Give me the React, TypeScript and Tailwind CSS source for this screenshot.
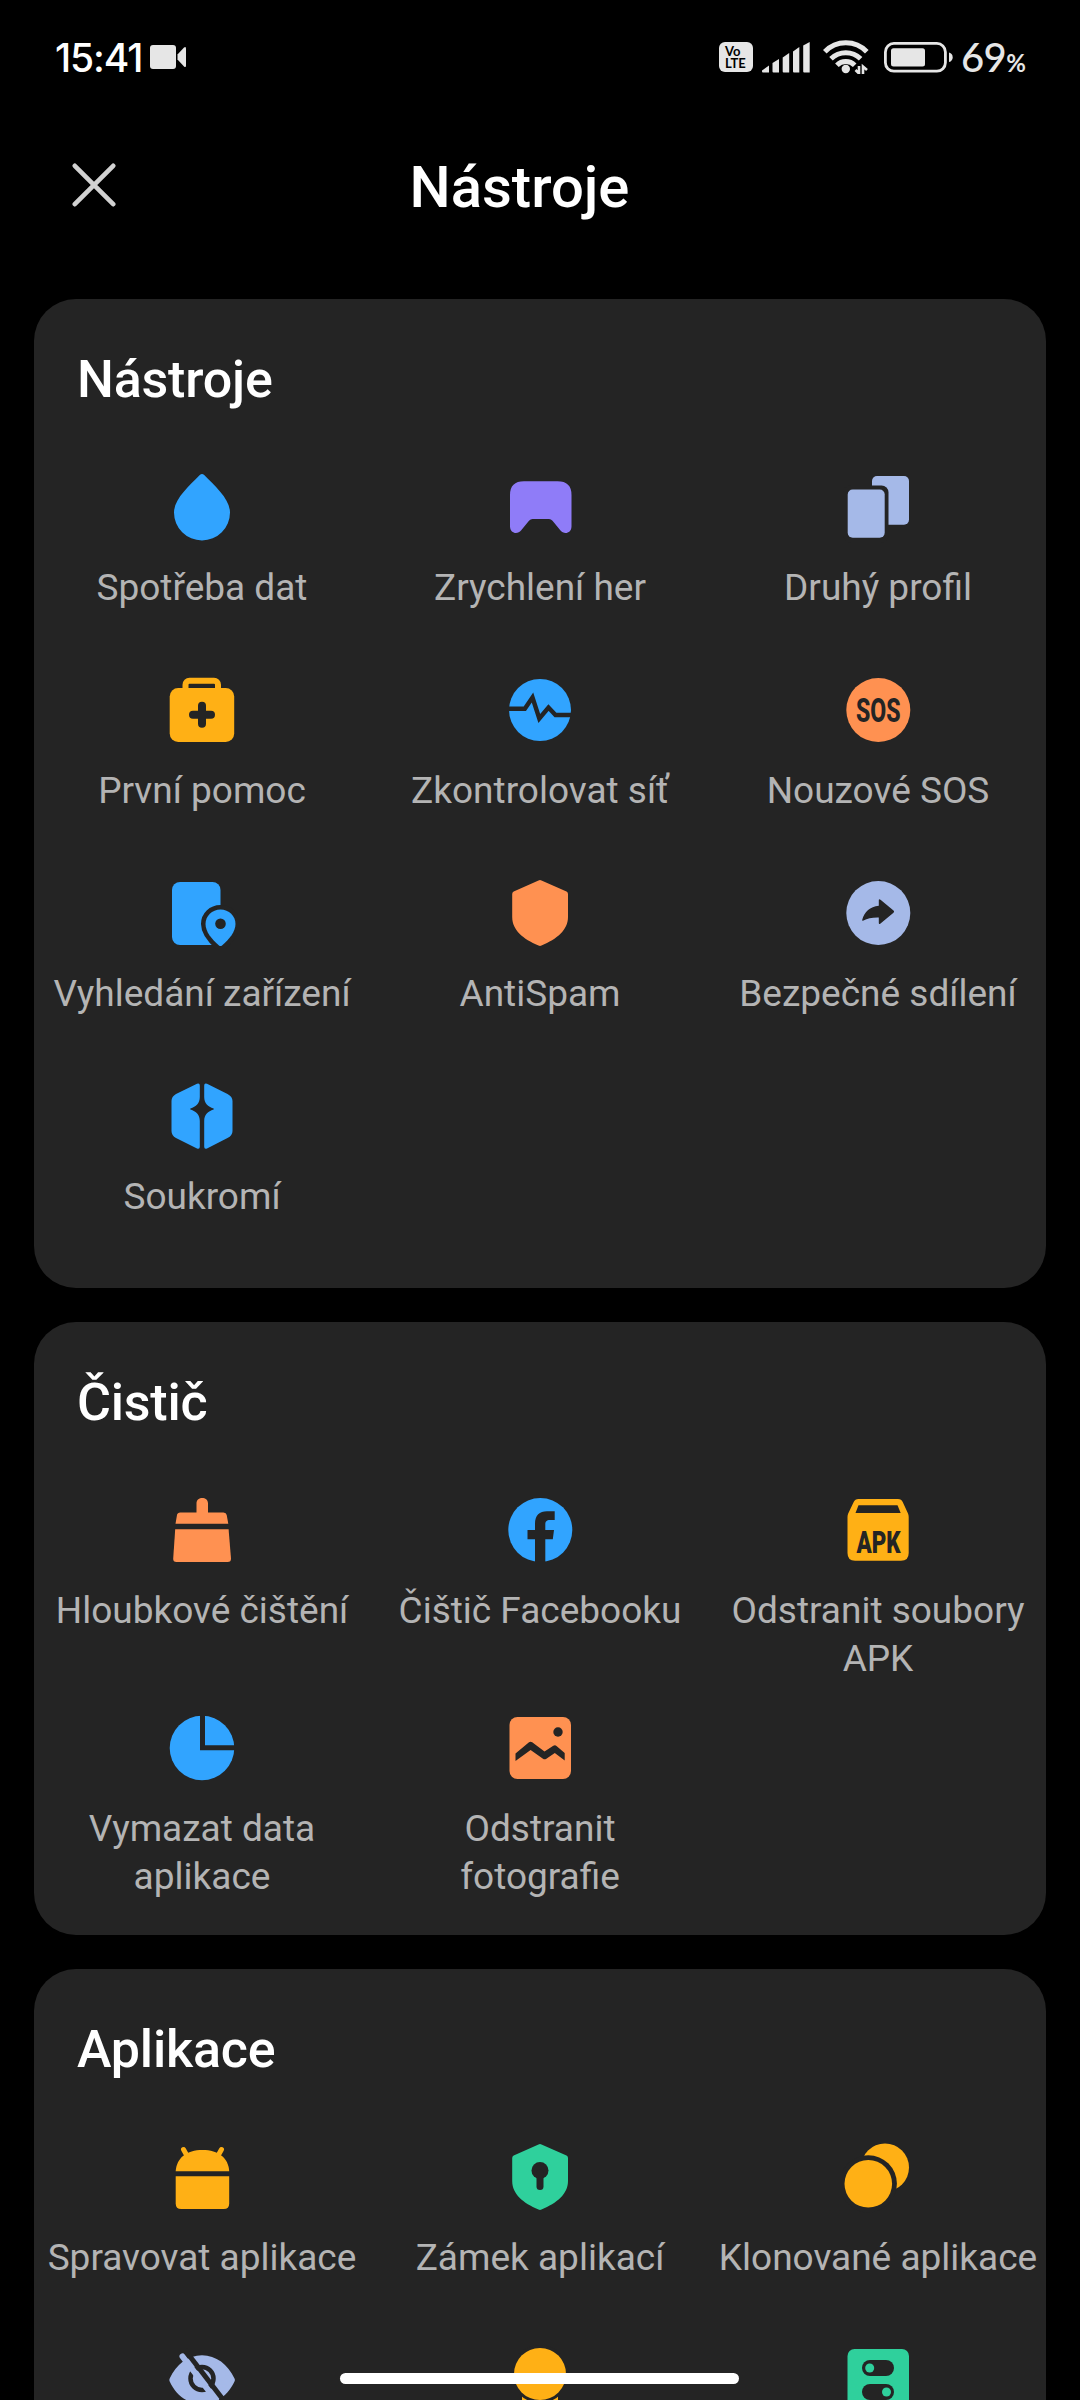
import type { ReactNode } from "react";

type Tool = {
  icon: ReactNode;
  label: string;
};

type ToolSection = {
  title: string;
  tools: Tool[];
};

const BLUE = "#31a4ff";
const ORANGE = "#ff9151";
const YELLOW = "#ffb015";
const LILAC = "#a5b9e8";
const PURPLE = "#8f7cf8";
const GREEN = "#2fd09c";
const CARD = "#242424";

function Icon({ children }: { children: ReactNode }) {
  return (
    <svg viewBox="0 0 72 72" className="h-[72px] w-[72px]" fill="none">
      {children}
    </svg>
  );
}

const SHIELD_PATH =
  "M34.5 3.5Q36 2.6 37.5 3.5L62.5 14.4Q64 15.2 64 17V40C64 53 53 62 37.5 68.6Q36 69.3 34.5 68.6C19 62 8.2 53 8.2 40V17Q8.2 15.2 9.7 14.4Z";

const DropIcon = () => (
  <Icon>
    <path
      d="M33.800 4Q36 1.800 38.200 4C49 15 64 28 64 41.500A28 28 0 0 1 8 41.500C8 28 23 15 33.800 4Z"
      fill={BLUE}
    />
  </Icon>
);

const GamepadIcon = () => (
  <Icon>
    <path
      d="M20 10.300H53.500Q67.500 10.300 67.500 24V55.500C67.300 63 59.500 63.500 56.500 59.500L48.500 49.700Q47 48 45 48H28.500Q26.500 48 25 49.700L17 59.500C14 63.500 6.300 63 6 55.500V24Q6 10.300 20 10.300Z"
      fill={PURPLE}
    />
  </Icon>
);

const SecondSpaceIcon = () => (
  <Icon>
    <rect x="30" y="5" width="37" height="48.800" rx="5" fill={LILAC} />
    <rect x="1.500" y="14.500" width="45" height="57" rx="7" fill={CARD} />
    <rect x="5.700" y="18.500" width="37" height="48.300" rx="5" fill={LILAC} />
  </Icon>
);

const FirstAidIcon = () => (
  <Icon>
    <rect x="19.500" y="6.700" width="32.500" height="18" rx="4" stroke={YELLOW} strokeWidth="6" />
    <rect x="3.700" y="14" width="64.500" height="54" rx="8.500" fill={YELLOW} />
    <path
      d="M36 31.700V49.700M27 40.700H45"
      stroke={CARD}
      strokeWidth="8"
      strokeLinecap="round"
    />
  </Icon>
);

const NetworkIcon = () => (
  <Icon>
    <circle cx="36" cy="36" r="31" fill={BLUE} />
    <path
      d="M3 34.700H20.800L28.500 23.500L35.300 44.500L44.500 33.500L51.500 41H69"
      stroke={CARD}
      strokeWidth="4.400"
    />
  </Icon>
);

const SosIcon = () => (
  <Icon>
    <circle cx="36.300" cy="36" r="32" fill={ORANGE} />
    <text
      transform="translate(36.300 47.500) scale(0.7 1)"
      textAnchor="middle"
      className="font-['Roboto'] text-[33px] font-extrabold"
      fill={CARD}
    >
      SOS
    </text>
  </Icon>
);

const FindDeviceIcon = () => (
  <Icon>
    <rect x="6" y="5" width="48.500" height="63" rx="8" fill={BLUE} />
    <path
      d="M54.500 32.500C63 32.500 69.500 39 69.500 47C69.500 55.500 63.500 62.500 54.500 70C45.500 62.500 39.500 55.500 39.500 47C39.500 39 46 32.500 54.500 32.500Z"
      fill={BLUE}
      stroke={CARD}
      strokeWidth="9"
    />
    <path
      d="M54.500 32.500C63 32.500 69.500 39 69.500 47C69.500 54.500 63.500 62 56 68.500Q54.500 69.700 53 68.500C45.500 62 39.500 54.500 39.500 47C39.500 39 46 32.500 54.500 32.500Z"
      fill={BLUE}
    />
    <circle cx="54.500" cy="46.700" r="5.300" fill={CARD} />
  </Icon>
);

const ShieldIcon = () => (
  <Icon>
    <path d={SHIELD_PATH} fill={ORANGE} />
  </Icon>
);

const ShareIcon = () => (
  <Icon>
    <circle cx="36.300" cy="36" r="32" fill={LILAC} />
    <path
      d="M36.800 23.500Q36.800 21.300 38.500 22.700L51.500 33.600Q52.800 34.700 51.500 35.800L38.500 46.500Q36.800 48 36.800 45.800V40.400C30 40.200 25.500 41.500 21.500 43.500Q19.700 44.300 20.300 42.500C22.500 35 28 29.500 36.800 28.800Z"
      fill={CARD}
    />
  </Icon>
);

const PrivacyIcon = () => (
  <Icon>
    <path
      d="M31 3.700Q33.800 2.600 33.800 5.500V17C33.800 23.500 30 26.500 24.500 28.500Q23.500 29 24.500 29.500C30 31.500 33.800 34.500 33.800 41V66.700Q33.800 69.600 31 68.500L10 58Q5.500 55.500 5.500 51V21Q5.500 16.500 10 14Z"
      fill={BLUE}
    />
    <path
      d="M41 3.700Q38.200 2.600 38.200 5.500V17C38.200 23.500 42 26.500 47.500 28.500Q48.500 29 47.500 29.500C42 31.500 38.200 34.500 38.200 41V66.700Q38.200 69.600 41 68.500L61.500 58Q66.500 55.500 66.500 51V21Q66.500 16.500 61.500 14Z"
      fill={BLUE}
    />
  </Icon>
);

const BroomIcon = () => (
  <Icon>
    <path
      d="M30.500 18.500V9.500C30.500 2.300 42 2.300 42 9.500V18.500H57.500Q60.300 18.500 60.700 21L62.300 29.800H9.500L11 21Q11.400 18.500 14.300 18.500Z"
      fill={ORANGE}
    />
    <path
      d="M9.200 35.200H62.600L65 64.500Q65.200 68 61.500 68H10.500Q7 68 7.200 64.500Z"
      fill={ORANGE}
    />
  </Icon>
);

const FacebookIcon = () => (
  <Icon>
    <circle cx="36.300" cy="36" r="32" fill={BLUE} />
    <path
      d="M31 70V45.200H23.500V36H31V30C31 21 35.500 17.300 43 17.300H50.700V26H46C42.500 26 41.300 27.500 41.300 30.500V36H50L48.800 45.200H41.300V70Z"
      fill={CARD}
    />
  </Icon>
);

const ApkIcon = () => (
  <Icon>
    <path
      d="M16.500 5H56Q59.500 5 60.700 8L66 19.500Q66.700 21 66.700 23V59Q66.700 66.800 59 66.800H13Q5.500 66.800 5.500 59V23Q5.500 21 6.200 19.500L11.700 8Q13 5 16.500 5Z"
      fill={YELLOW}
    />
    <path d="M16.500 11.300H55.500L58.700 19H13.500Z" fill={CARD} />
    <text
      transform="translate(36.500 58.700) scale(0.7 1)"
      textAnchor="middle"
      className="font-['Roboto'] text-[32px] font-black"
      fill={CARD}
    >
      APK
    </text>
  </Icon>
);

const PieIcon = () => (
  <Icon>
    <circle cx="36" cy="36" r="32.300" fill={BLUE} />
    <path d="M36.500 0V35.700H72" stroke={CARD} strokeWidth="5" />
  </Icon>
);

const PhotoIcon = () => (
  <Icon>
    <rect x="5.500" y="5" width="61.500" height="62" rx="8" fill={ORANGE} />
    <circle cx="54" cy="20" r="4.700" fill={CARD} />
    <path
      d="M11.500 41.500L25 30.300Q26.600 29 28.200 30.300L40.500 39.500L49.300 33.800Q51 32.700 52.500 33.900L60.700 41V48.500L50.800 41L42 46.900Q40.500 47.900 39 46.700L26.600 38L11.500 49Z"
      fill={CARD}
    />
  </Icon>
);

const AndroidIcon = () => (
  <Icon>
    <path d="M17.500 8.500L22 16.500M55.500 8.500L51 16.500" stroke={YELLOW} strokeWidth="5" strokeLinecap="round" />
    <path d="M9.700 30.300C10.500 17 20.500 9 36.500 9C52.500 9 62.500 17 63.200 30.300Z" fill={YELLOW} />
    <path d="M9.700 35.300H63.200V62.500Q63.200 68 57.700 68H15.200Q9.700 68 9.700 62.500Z" fill={YELLOW} />
  </Icon>
);

const LockShieldIcon = () => (
  <Icon>
    <path d={SHIELD_PATH} fill={GREEN} />
    <circle cx="36" cy="29.500" r="8.500" fill={CARD} />
    <path d="M36 32V45.500" stroke={CARD} strokeWidth="7" strokeLinecap="round" />
  </Icon>
);

const ClonesIcon = () => (
  <Icon>
    <circle cx="43" cy="26.500" r="24" fill={YELLOW} />
    <circle cx="26.300" cy="42.800" r="28.600" fill={CARD} />
    <circle cx="26.300" cy="42.800" r="23.800" fill={YELLOW} />
  </Icon>
);

const HiddenIcon = () => (
  <Icon>
    <path
      d="M3.700 34.500C10 20.500 22 11.300 36 11.300C50 11.300 62 20.500 68.500 34.500Q69.300 36 68.500 37.500C62 51.500 50 60 36 60C22 60 10 51.500 3.700 37.500Q3 36 3.700 34.500Z"
      fill={LILAC}
    />
    <circle cx="36" cy="34.500" r="11.500" stroke={CARD} strokeWidth="4.500" />
    <path d="M16.500 12.500L50 56" stroke={LILAC} strokeWidth="6" strokeLinecap="round" />
    <path d="M19 6L57 55.500" stroke={CARD} strokeWidth="5" />
  </Icon>
);

const MedalIcon = () => (
  <Icon>
    <path d="M18 51L36 58L54 51V72H18Z" fill={YELLOW} />
    <circle cx="36" cy="30" r="29" fill={CARD} />
    <circle cx="36" cy="30" r="26" fill={YELLOW} />
  </Icon>
);

const SwitchesIcon = () => (
  <Icon>
    <rect x="5.500" y="5" width="61.500" height="62" rx="7" fill={GREEN} />
    <rect x="20" y="16" width="32" height="16" rx="8" fill={CARD} />
    <circle cx="27.700" cy="24" r="4.500" fill={GREEN} />
    <rect x="20" y="40" width="32" height="16" rx="8" fill={CARD} />
    <circle cx="44.500" cy="48" r="4.500" fill={GREEN} />
  </Icon>
);

const SECTIONS: ToolSection[] = [
  {
    title: "Nástroje",
    tools: [
      { icon: <DropIcon />, label: "Spotřeba dat" },
      { icon: <GamepadIcon />, label: "Zrychlení her" },
      { icon: <SecondSpaceIcon />, label: "Druhý profil" },
      { icon: <FirstAidIcon />, label: "První pomoc" },
      { icon: <NetworkIcon />, label: "Zkontrolovat síť" },
      { icon: <SosIcon />, label: "Nouzové SOS" },
      { icon: <FindDeviceIcon />, label: "Vyhledání zařízení" },
      { icon: <ShieldIcon />, label: "AntiSpam" },
      { icon: <ShareIcon />, label: "Bezpečné sdílení" },
      { icon: <PrivacyIcon />, label: "Soukromí" },
    ],
  },
  {
    title: "Čistič",
    tools: [
      { icon: <BroomIcon />, label: "Hloubkové čištění" },
      { icon: <FacebookIcon />, label: "Čištič Facebooku" },
      { icon: <ApkIcon />, label: "Odstranit soubory\nAPK" },
      { icon: <PieIcon />, label: "Vymazat data\naplikace" },
      { icon: <PhotoIcon />, label: "Odstranit\nfotografie" },
    ],
  },
  {
    title: "Aplikace",
    tools: [
      { icon: <AndroidIcon />, label: "Spravovat aplikace" },
      { icon: <LockShieldIcon />, label: "Zámek aplikací" },
      { icon: <ClonesIcon />, label: "Klonované aplikace" },
      { icon: <HiddenIcon />, label: "" },
      { icon: <MedalIcon />, label: "" },
      { icon: <SwitchesIcon />, label: "" },
    ],
  },
];

function StatusBar() {
  return (
    <div className="flex h-[114px] shrink-0 items-center justify-between pr-[54px] pl-[55px] text-[#e6e6e6]">
      <div className="flex items-center gap-[8px]">
        <span className="font-['Inter'] text-[39px] leading-none font-medium tracking-[-1.1px] text-white">
          15:41
        </span>
        <svg viewBox="0 0 36 24" className="h-6 w-9" fill="currentColor">
          <rect width="26" height="24" rx="3" />
          <path d="M27.500 9.500L34 2.500Q36 1 36 3.500V20.500Q36 23 34 21.500L27.500 14.500Z" />
        </svg>
      </div>

      <div className="flex items-center">
        <div className="flex h-[30px] w-[34px] flex-col items-start justify-center rounded-[6px] bg-[#e6e6e6] pl-[6px] font-['Lato'] text-[13px] leading-[12px] font-bold text-black">
          <span>Vo</span>
          <span>LTE</span>
        </div>

        <svg viewBox="0 0 48 31" className="ml-[9px] h-[31px] w-12" fill="currentColor">
          <path d="M0 28.500L7 23.500V30.500H1Q0 30.500 0 29.500Z" />
          <path d="M10.500 21L17 17V30.500H11.500Q10.500 30.500 10.500 29.500Z" />
          <path d="M20.700 15.500L27.200 11V30.500H21.700Q20.700 30.500 20.700 29.500Z" />
          <path d="M31 9.500L37.300 5V30.500H32Q31 30.500 31 29.500Z" />
          <path d="M41.200 3.500L47.700 0V30.500H42.200Q41.200 30.500 41.200 29.500Z" />
        </svg>

        <svg viewBox="0 0 46 34" className="ml-[13px] h-[34px] w-[46px]" fill="none" stroke="currentColor" strokeWidth="5">
          <path d="M1.800 11.800A29 29 0 0 1 43.800 11.800" />
          <path d="M8 18.800A21 21 0 0 1 37.600 18.800" />
          <path d="M13.900 25.300A12.500 12.500 0 0 1 31.700 25.300" />
          <circle cx="22.800" cy="29" r="4.200" fill="currentColor" stroke="none" />
          <path d="M36 26V33.500L32.500 30M40 34V26.500L44 30" strokeWidth="2.600" />
        </svg>

        <svg viewBox="0 0 70 31" className="ml-[15px] h-[31px] w-[70px]" fill="currentColor">
          <rect x="1.400" y="1.400" width="60" height="27.800" rx="8.500" fill="none" stroke="currentColor" strokeWidth="2.800" />
          <rect x="7" y="6.200" width="34" height="18.300" rx="2.500" />
          <path d="M65 10.500Q68.700 11.500 68.700 15.300Q68.700 19.100 65 20.100Z" />
        </svg>

        <div className="ml-[7px] flex items-baseline font-['Lato'] leading-none font-medium">
          <span className="text-[40px] tracking-[-0.5px]">69</span>
          <span className="text-[24px] font-bold">%</span>
        </div>
      </div>
    </div>
  );
}

function Header() {
  return (
    <header className="flex h-[146px] shrink-0 items-center pr-[157px] pl-[72px]">
      <button type="button" aria-label="Zavřít" className="mb-[4px]">
        <svg viewBox="0 0 44 44" className="h-11 w-11" stroke="#d2d2d2" strokeWidth="4.600" strokeLinecap="round">
          <path d="M2.800 2.800L41.200 41.200M41.200 2.800L2.800 41.200" />
        </svg>
      </button>
      <h1 className="flex-1 text-center text-[58px] leading-[72px] font-medium text-white">Nástroje</h1>
    </header>
  );
}

function ToolCard({ title, tools }: ToolSection) {
  return (
    <section className="rounded-[42px] bg-[#242424] pt-[53px] pb-[17px]">
      <h2 className="mb-[51px] pl-[43px] text-[52px] leading-[56px] font-medium tracking-[-0.2px] text-white">
        {title}
      </h2>
      <div className="-mx-px grid grid-cols-3">
        {tools.map((tool, index) => (
          <div key={tool.label || index} className="flex min-h-[203px] flex-col items-center px-1 pt-[12px] pb-[17px]">
            {tool.icon}
            <p className="mt-[21px] text-center text-[37px] leading-[48px] whitespace-pre-line text-[#b4b4b4]">
              {tool.label}
            </p>
          </div>
        ))}
      </div>
    </section>
  );
}

export default function App() {
  return (
    <div className="relative flex h-[2400px] w-[1080px] flex-col overflow-hidden bg-black font-['Roboto',sans-serif]">
      <StatusBar />
      <Header />
      <main className="flex flex-col gap-[34px] px-[34px] pt-[39px]">
        {SECTIONS.map((section) => (
          <ToolCard key={section.title} {...section} />
        ))}
      </main>

      {/* gesture bar */}
      <div className="absolute bottom-[16px] left-[340px] h-[11px] w-[399px] rounded-full bg-white" />
    </div>
  );
}
